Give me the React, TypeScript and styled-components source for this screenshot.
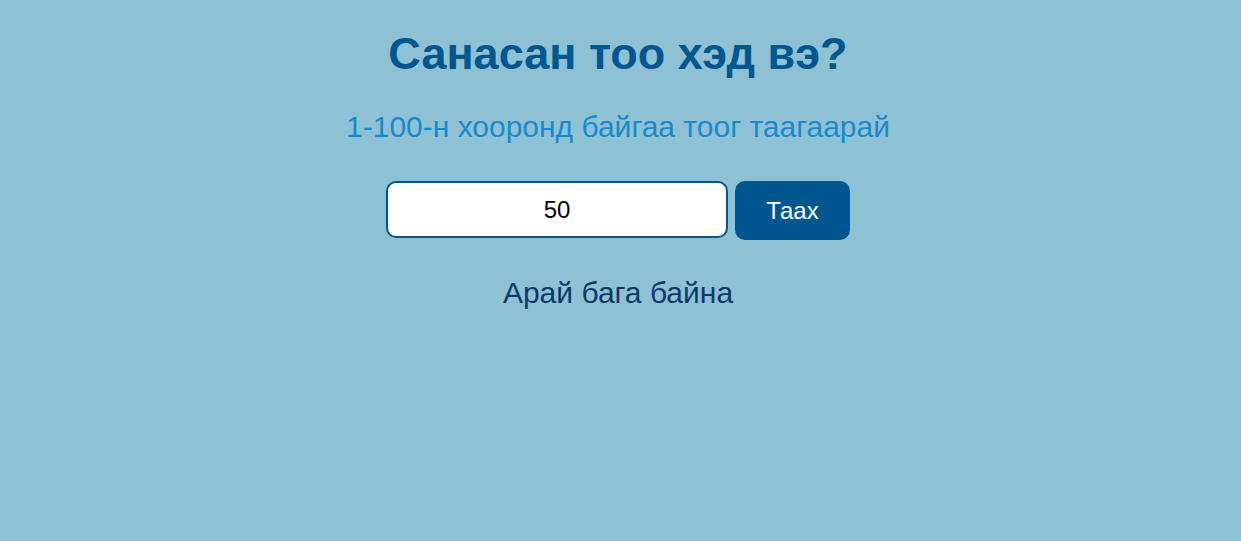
import React, { useState } from 'react';
import styled, { createGlobalStyle } from 'styled-components';

const GlobalStyle = createGlobalStyle`
  html, body {
    margin: 0;
    padding: 0;
    background-color: #8fc1d4;
    font-family: "Liberation Sans", Arial, sans-serif;
  }
`;

const App = () => {
  const [guess, setGuess] = useState<string>('50');
  const [message, setMessage] = useState<string>('Арай бага байна');

  const handleGuess = () => {
    const n = Number(guess);
    if (n < 73) setMessage('Арай бага байна');
    else if (n > 73) setMessage('Арай их байна');
    else setMessage('Зөв таалаа!');
  };

  return (
    <>
      <GlobalStyle />
      <Container>
        <Title>Санасан тоо хэд вэ?</Title>
        <SubTitle>1-100-н хооронд байгаа тоог таагаарай</SubTitle>
        <GuessForm
          onSubmit={(e) => {
            e.preventDefault();
            handleGuess();
          }}
        >
          <GuessInput
            type="number"
            value={guess}
            onChange={(e) => setGuess(e.target.value)}
          />
          <GuessButton type="submit">Таах</GuessButton>
        </GuessForm>
        <Message>{message}</Message>
      </Container>
    </>
  );
};

export default App;

const Container = styled.div`
  display: flex;
  flex-direction: column;
  align-items: center;
  padding: 28px 5px 0 0;
  min-height: 541px;
  box-sizing: border-box;
`;

const Title = styled.h1`
  margin: 0;
  font-size: 45px;
  font-weight: 700;
  color: #00578f;
  line-height: 52px;
`;

const SubTitle = styled.p`
  margin: 30px 0 0;
  font-size: 30px;
  color: #188ace;
  line-height: 34px;
`;

const GuessForm = styled.form`
  display: flex;
  align-items: flex-start;
  gap: 7px;
  margin-top: 37px;
`;

const GuessInput = styled.input`
  width: 342px;
  height: 57px;
  box-sizing: border-box;
  border: 2px solid #00578f;
  border-radius: 10px;
  background: #ffffff;
  text-align: center;
  font-family: "Liberation Sans", Arial, sans-serif;
  font-size: 24px;
  color: #000000;
  outline: none;
  -moz-appearance: textfield;
  &::-webkit-outer-spin-button,
  &::-webkit-inner-spin-button {
    -webkit-appearance: none;
    margin: 0;
  }
`;

const GuessButton = styled.button`
  width: 115px;
  height: 59px;
  border: none;
  border-radius: 10px;
  background-color: #00578f;
  color: #ffffff;
  font-family: "Liberation Sans", Arial, sans-serif;
  font-size: 24px;
  cursor: pointer;
`;

const Message = styled.p`
  margin: 36px 0 0;
  font-size: 30px;
  color: #0b3a68;
  line-height: 34px;
`;
